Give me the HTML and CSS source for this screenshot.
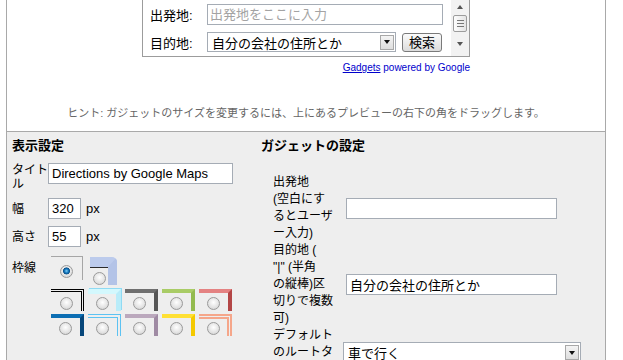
FILE: index.html
```html
<!DOCTYPE html>
<html lang="ja">
<head>
    <meta charset="UTF-8">
    <title>ガジェットの設定</title>
    <link rel="stylesheet" href="styles.css">
</head>
<body>
    <div class="panel">
        <div class="preview">
            <div class="gadget">
                <div class="gadget-body">
                    <div class="g-grid">
                        <span class="g-label">出発地:</span>
                        <input class="g-input" type="text" placeholder="出発地をここに入力">
                        <span class="g-label">目的地:</span>
                        <div class="g-line">
                            <div class="combo g-combo">
                                <span class="combo-text">自分の会社の住所とか</span>
                                <span class="combo-arrow"><span class="tri"></span></span>
                            </div>
                            <button class="g-btn">検索</button>
                        </div>
                    </div>
                </div>
                <div class="scrollbar">
                    <span class="sb-btn"><span class="tri tri-up"></span></span>
                    <span class="sb-thumb"><span class="grip"></span></span>
                    <span class="sb-track"></span>
                    <span class="sb-btn sb-down"><span class="tri"></span></span>
                </div>
            </div>
            <div class="powered"><a href="#">Gadgets</a> powered by Google</div>
            <div class="hint">ヒント: ガジェットのサイズを変更するには、上にあるプレビューの右下の角をドラッグします。</div>
        </div>

        <div class="settings">
            <div class="col-left">
                <h3>表示設定</h3>
                <div class="opt-list">
                    <div class="opt-row">
                        <span class="opt-label">タイトル</span>
                        <input class="text-input title-input" type="text" value="Directions by Google Maps">
                    </div>
                    <div class="opt-row mid">
                        <span class="opt-label">幅</span>
                        <input class="text-input small-input" type="text" value="320">
                        <span class="px">px</span>
                    </div>
                    <div class="opt-row mid">
                        <span class="opt-label">高さ</span>
                        <input class="text-input small-input" type="text" value="55">
                        <span class="px">px</span>
                    </div>
                    <div class="opt-row frame-row">
                        <span class="opt-label frame-label">枠線</span>
                        <div class="frames">
                            <div class="frames-top">
                                <label class="frame f-none"><input type="radio" name="frame" checked></label>
                                <label class="frame f-round"><input type="radio" name="frame"></label>
                            </div>
                            <div class="frames-grid">
                                <label class="frame f-black"><input type="radio" name="frame"></label>
                                <label class="frame f-cyan"><input type="radio" name="frame"></label>
                                <label class="frame f-gray"><input type="radio" name="frame"></label>
                                <label class="frame f-green"><input type="radio" name="frame"></label>
                                <label class="frame f-red"><input type="radio" name="frame"></label>
                                <label class="frame f-blue"><input type="radio" name="frame"></label>
                                <label class="frame f-sky"><input type="radio" name="frame"></label>
                                <label class="frame f-mauve"><input type="radio" name="frame"></label>
                                <label class="frame f-yellow"><input type="radio" name="frame"></label>
                                <label class="frame f-salmon"><input type="radio" name="frame"></label>
                            </div>
                        </div>
                    </div>
                </div>
            </div>

            <div class="col-right">
                <h3>ガジェットの設定</h3>
                <table class="route-table">
                    <tr>
                        <td class="route-label">出発地<br>(空白にするとユーザー入力)</td>
                        <td><input class="text-input route-input" type="text"></td>
                    </tr>
                    <tr>
                        <td class="route-label">目的地 (<br>"|" (半角<br>の縦棒)区切りで複数可)</td>
                        <td><input class="text-input route-input" type="text" value="自分の会社の住所とか"></td>
                    </tr>
                    <tr>
                        <td class="route-label">デフォルトのルートタイプ</td>
                        <td>
                            <div class="combo route-combo">
                                <span class="combo-text">車で行く</span>
                                <span class="combo-arrow"><span class="tri"></span></span>
                            </div>
                        </td>
                    </tr>
                </table>
            </div>
        </div>
    </div>
</body>
</html>
```

FILE: styles.css
```css
body {
    margin: 0;
    background-color: #fff;
    font-family: "Liberation Sans", "Noto Sans CJK JP", sans-serif;
    font-size: 12px;
    color: #000;
}

.panel {
    margin-left: 6px;
    width: 598px;
    border-left: 1px solid #a9a9a9;
    border-right: 1px solid #a9a9a9;
}

/* preview area */
.preview {
    height: 131px;
    border-bottom: 1px solid #a9a9a9;
    overflow: hidden;
}

.gadget {
    margin: -1px 0 0 135px;
    width: 326px;
    height: 56px;
    border: 1px solid #9c9c9c;
    display: flex;
}

.gadget-body {
    flex: 1;
    padding: 4px 0 0 7px;
}

.g-grid {
    display: grid;
    grid-template-columns: 57px auto;
    row-gap: 7px;
    align-items: center;
}

.g-label {
    font-size: 13px;
}

.g-input {
    width: 236px;
    height: 21px;
    box-sizing: border-box;
    border: 1px solid #a5acb5;
    padding: 0 2px;
    font: 13px "Liberation Sans", "Noto Sans CJK JP", sans-serif;
}

.g-input::placeholder {
    color: #a3a3a3;
}

.g-line {
    display: flex;
    align-items: center;
}

.combo {
    display: flex;
    align-items: center;
    box-sizing: border-box;
    border: 1px solid #a5acb5;
    background-color: #fff;
    padding: 1px 1px 1px 4px;
    font-size: 13px;
}

.g-combo {
    width: 189px;
    height: 20px;
}

.combo-text {
    flex: 1;
    white-space: nowrap;
    overflow: hidden;
}

.combo-arrow {
    width: 14px;
    height: 15px;
    box-sizing: border-box;
    border: 1px solid #a8a8a8;
    background: linear-gradient(#f4f4f4, #dedede);
    display: flex;
    align-items: center;
    justify-content: center;
}

.tri {
    width: 0;
    height: 0;
    border-left: 3px solid transparent;
    border-right: 3px solid transparent;
    border-top: 4px solid #111;
}

.tri-up {
    border-top: none;
    border-bottom: 4px solid #555;
}

.g-btn {
    margin-left: 6px;
    width: 40px;
    height: 19px;
    padding: 0;
    border: 1px solid #7a7a7a;
    border-radius: 3px;
    background: linear-gradient(#fbfbfb, #dcdcdc);
    font: 13px/17px "Liberation Sans", "Noto Sans CJK JP", sans-serif;
    color: #000;
}

.scrollbar {
    width: 18px;
    display: flex;
    flex-direction: column;
    align-items: center;
    background-color: #f2f2f2;
}

.sb-btn {
    height: 14px;
    display: flex;
    align-items: center;
    justify-content: center;
}

.sb-btn .tri {
    border-top-color: #555;
}

.sb-down {
    margin-bottom: 5px;
}

.sb-thumb {
    margin-top: 1px;
    width: 14px;
    height: 17px;
    box-sizing: border-box;
    border: 1px solid #9c9c9c;
    border-radius: 2px;
    background: linear-gradient(to right, #fdfdfd, #e4e4e4);
    display: flex;
    align-items: center;
    justify-content: center;
}

.grip {
    width: 7px;
    height: 5px;
    border-top: 1px solid #777;
    border-bottom: 1px solid #777;
    background: linear-gradient(transparent 2px, #777 2px, #777 3px, transparent 3px);
}

.sb-track {
    flex: 1;
}

.powered {
    width: 328px;
    margin: 5px 0 0 135px;
    text-align: right;
    font-size: 10px;
    line-height: 12px;
    color: #0000cc;
}

.powered a {
    color: #0000cc;
}

.hint {
    margin-top: 32px;
    text-align: center;
    font-size: 11px;
    line-height: 14px;
    color: #666;
}

/* settings area */
.settings {
    display: flex;
    height: 228px;
    overflow: hidden;
    background-color: #eeeeee;
}

.col-left {
    width: 254px;
    box-sizing: border-box;
    padding: 6px 0 0 5px;
}

.col-right {
    flex: 1;
    padding-top: 6px;
}

h3 {
    margin: 0;
    font-size: 13px;
    line-height: 16px;
    font-weight: bold;
}

.opt-list {
    margin-top: 9px;
    display: flex;
    flex-direction: column;
    gap: 7px;
}

.opt-row {
    display: flex;
    align-items: flex-start;
}

.opt-row.mid {
    align-items: center;
}

.opt-label {
    width: 36px;
    flex: none;
    line-height: 14px;
}

.text-input {
    box-sizing: border-box;
    height: 21px;
    margin: 0;
    border: 1px solid #a5acb5;
    padding: 0 3px;
    background-color: #fff;
    font: 13px "Liberation Sans", "Noto Sans CJK JP", sans-serif;
}

.title-input {
    width: 185px;
}

.small-input {
    width: 33px;
}

.px {
    margin-left: 5px;
    font-size: 13px;
}

.frame-row {
    margin-top: 2px;
}

.frame-label {
    padding-top: 5px;
}

.frames {
    margin-left: 3px;
}

.frames-top {
    display: flex;
    align-items: flex-start;
    gap: 7px;
    height: 29px;
}

.frames-grid {
    margin-top: 4px;
    display: grid;
    grid-template-columns: repeat(5, 33px);
    column-gap: 4px;
    row-gap: 3px;
}

.frame {
    box-sizing: border-box;
    width: 33px;
    height: 22px;
    display: flex;
    justify-content: center;
    align-items: flex-end;
    padding-bottom: 1px;
    border-top: 4px solid transparent;
    border-right: 4px solid transparent;
}

.frame input {
    appearance: none;
    -webkit-appearance: none;
    width: 13px;
    height: 13px;
    margin: 0;
    border: 1px solid #9a9a9a;
    border-radius: 50%;
    background: radial-gradient(circle at 50% 40%, #ffffff 0, #e2e2e2 60%, #c9c9c9 100%);
}

.frame input:checked {
    background:
        radial-gradient(circle at 50% 45%, #7fd0f5 0, #1476bd 2px, #0b4f86 3.2px, transparent 3.8px),
        radial-gradient(circle at 50% 40%, #ffffff 0, #e2e2e2 60%, #c9c9c9 100%);
}

.f-none {
    width: 32px;
    height: 24px;
    padding-bottom: 2px;
    border-top: 1px solid #a6a6a6;
    border-right: 1px solid #a6a6a6;
}

.f-round {
    margin-top: 1px;
    width: 27px;
    height: 28px;
    padding-bottom: 0;
    border-top: 10px solid #bccbec;
    border-right: 9px solid #b3c3e7;
    border-top-right-radius: 5px;
    box-shadow: inset 0 1px 0 #2b2b2b;
}

.f-black {
    border-top: 3px double #000;
    border-right: 3px double #000;
}

.f-cyan {
    border-top: 5px solid #d3f8fd;
    border-right: 5px solid #b9ecf9;
    box-shadow: 1px -1px 0 #8fdaf3;
}

.f-gray {
    border-top-color: #6f6f6f;
    border-right-color: #565656;
}

.f-green {
    border-top-color: #a9cc66;
    border-right-color: #93ba4e;
}

.f-red {
    border-top-color: #e48282;
    border-right-color: #b34646;
}

.f-blue {
    border-top-color: #0c6eb3;
    border-right-color: #06467a;
}

.f-sky {
    border-top: 4px double #5cc2f2;
    border-right: 4px double #5cc2f2;
}

.f-mauve {
    border-top-color: #bba8bd;
    border-right-color: #9f8aa3;
}

.f-yellow {
    border-top-color: #ffe034;
    border-right-color: #f4c900;
}

.f-salmon {
    border-top: 5px double #f5a68a;
    border-right: 5px double #f5a68a;
}

.route-table {
    margin: 20px 0 0 12px;
    border-collapse: collapse;
}

.route-table td {
    padding: 0;
    vertical-align: middle;
}

.route-table .route-label {
    width: 62px;
    padding-right: 8px;
    line-height: 17px;
}

.route-input {
    margin-left: 3px;
    width: 211px;
}

.route-combo {
    width: 238px;
    height: 21px;
}
```
